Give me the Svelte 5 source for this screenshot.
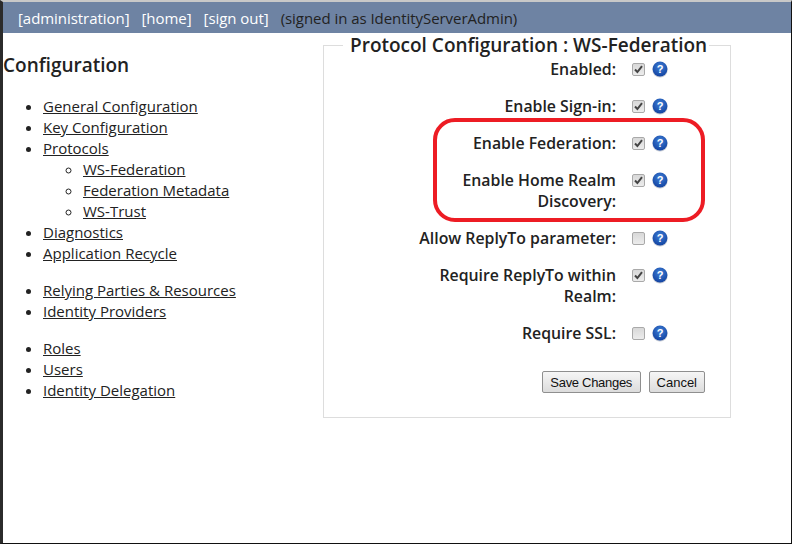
<script>
  const nav1 = ["General Configuration", "Key Configuration"];
  const protocols = ["WS-Federation", "Federation Metadata", "WS-Trust"];
  const nav2 = ["Diagnostics", "Application Recycle"];
  const nav3 = ["Relying Parties & Resources", "Identity Providers"];
  const nav4 = ["Roles", "Users", "Identity Delegation"];

  const fields = [
    { label: "Enabled:", checked: true },
    { label: "Enable Sign-in:", checked: true },
    { label: "Enable Federation:", checked: true },
    { label: "Enable Home Realm Discovery:", checked: true },
    { label: "Allow ReplyTo parameter:", checked: false },
    { label: "Require ReplyTo within Realm:", checked: true },
    { label: "Require SSL:", checked: false }
  ];
</script>

<div class="frame">
  <header class="topbar">
    <a href="#a">[administration]</a>
    <a href="#h">[home]</a>
    <a href="#s">[sign out]</a>
    <span>(signed in as IdentityServerAdmin)</span>
  </header>

  <div class="content">
    <aside class="sidebar">
      <h2>Configuration</h2>
      <ul>
        {#each nav1 as item}
          <li><a href="#n">{item}</a></li>
        {/each}
        <li>
          <a href="#n">Protocols</a>
          <ul class="sub">
            {#each protocols as item}
              <li><a href="#n">{item}</a></li>
            {/each}
          </ul>
        </li>
        {#each nav2 as item}
          <li><a href="#n">{item}</a></li>
        {/each}
      </ul>
      <ul class="group">
        {#each nav3 as item}
          <li><a href="#n">{item}</a></li>
        {/each}
      </ul>
      <ul class="group">
        {#each nav4 as item}
          <li><a href="#n">{item}</a></li>
        {/each}
      </ul>
    </aside>

    <fieldset class="panel">
      <legend>Protocol Configuration : WS-Federation</legend>
      <div class="highlight"></div>
      {#each fields as field}
        <div class="row">
          <label for={field.label}>{field.label}</label>
          <span class="check">
            {#if field.checked}
              <svg width="9" height="9" viewBox="0 0 9 9"><path d="M1 4.5 L3.4 7 L8 1.2" fill="none" stroke="#444" stroke-width="2"/></svg>
            {/if}
          </span>
          <svg class="help" width="16" height="17" viewBox="0 0 16 17">
            <defs>
              <radialGradient id="ball" cx="50%" cy="35%" r="70%">
                <stop offset="0%" stop-color="#3f7fd6"/>
                <stop offset="100%" stop-color="#0f3f9e"/>
              </radialGradient>
            </defs>
            <circle cx="8" cy="8.8" r="7.7" fill="#8a94a8" opacity="0.5"/>
            <circle cx="8" cy="8" r="7.4" fill="url(#ball)"/>
            <text x="8" y="12" text-anchor="middle">?</text>
          </svg>
        </div>
      {/each}
      <div class="actions">
        <button type="button" class="save">Save Changes</button>
        <button type="button">Cancel</button>
      </div>
    </fieldset>
  </div>
</div>

<style>
  :global(body) {
    background: #fff;
  }

  .frame {
    width: 792px;
    height: 544px;
    box-sizing: border-box;
    border-top: 2px solid #c8c8c8;
    border-left: 3px solid #2b2b2b;
    border-right: 1px solid #111;
    border-bottom: 1px solid #111;
    font-family: "Open Sans", sans-serif;
    color: #222;
    overflow: hidden;
  }

  .topbar {
    height: 31px;
    background: #6e83a3;
    display: flex;
    align-items: center;
    gap: 12px;
    padding-left: 15px;
    font-size: 15px;
    letter-spacing: -0.05px;
  }

  .topbar a {
    color: #fff;
    text-decoration: none;
  }

  .content {
    display: flex;
    position: relative;
  }

  .sidebar {
    width: 320px;
    flex: none;
    font-size: 15px;
  }

  h2 {
    font-size: 19px;
    font-weight: 600;
    margin: 20px 0 19px;
    line-height: 24px;
  }

  ul {
    margin: 0;
    padding-left: 40px;
    list-style: disc;
  }

  .sub {
    list-style: circle;
  }

  .group {
    margin-top: 16px;
  }

  li {
    line-height: 21px;
  }

  a {
    color: #222;
  }

  .panel {
    width: 408px;
    min-width: 0;
    height: 385px;
    box-sizing: border-box;
    margin: 0;
    padding: 2px 25px 0 0;
    border: 1px solid #ddd;
    position: relative;
  }

  legend {
    margin-left: 19px;
    padding: 0 2px 0 7px;
    font-size: 19px;
    font-weight: 600;
    line-height: 24px;
    white-space: nowrap;
  }

  .highlight {
    position: absolute;
    left: 109px;
    top: 61px;
    width: 272px;
    height: 104px;
    box-sizing: border-box;
    border: 4px solid #ed1c24;
    border-radius: 22px;
  }

  .row {
    display: flex;
    align-items: flex-start;
    margin-bottom: 16px;
  }

  label {
    width: 292px;
    text-align: right;
    font-size: 15.85px;
    font-weight: 600;
    line-height: 21px;
    padding-left: 90px;
    box-sizing: border-box;
  }

  .check {
    width: 11px;
    height: 11px;
    margin: 4px 0 0 16px;
    border: 1px solid #a9a9a9;
    border-radius: 2px;
    background: linear-gradient(#d8d8d8, #ececec);
    display: flex;
    align-items: center;
    justify-content: center;
    flex: none;
  }

  .help {
    margin: 2px 0 0 7px;
    flex: none;
  }

  .help text {
    fill: #fff;
    font-size: 11px;
    font-weight: 700;
    font-family: "Liberation Sans", sans-serif;
  }

  .actions {
    display: flex;
    justify-content: flex-end;
    gap: 8px;
    margin-top: 27px;
  }

  button {
    height: 22px;
    padding: 0 7px;
    font-family: "Liberation Sans", sans-serif;
    font-size: 13px;
    color: #111;
    border: 1px solid #8f8f8f;
    border-radius: 2px;
    background: linear-gradient(#f6f6f6, #dcdcdc);
  }

  .save {
    letter-spacing: -0.3px;
    padding: 0 7.5px;
  }
</style>
